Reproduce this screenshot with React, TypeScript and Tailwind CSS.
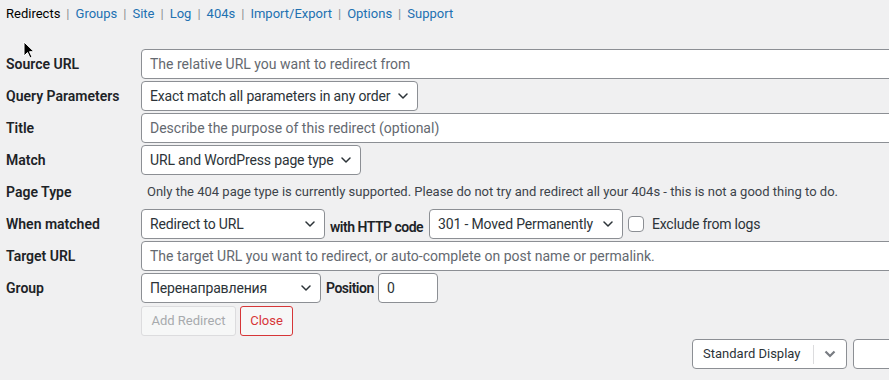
import React from "react";

const navItems = ["Groups", "Site", "Log", "404s", "Import/Export", "Options", "Support"];

const Chevron: React.FC = () => (
  <svg width="10" height="6" viewBox="0 0 10 6" fill="none" className="shrink-0">
    <path d="M1 1l4 4 4-4" stroke="#2c3338" strokeWidth="1.5" strokeLinecap="round" strokeLinejoin="round" />
  </svg>
);

const Select: React.FC<{ value: string; className: string }> = ({ value, className }) => (
  <div
    className={`flex h-[30px] items-center justify-between rounded-[4px] border border-[#8c8f94] bg-white pl-2 pr-[9px] text-[14px] text-[#2c3338] ${className}`}
  >
    <span className="whitespace-nowrap tracking-[-0.15px]">{value}</span>
    <Chevron />
  </div>
);

const TextInput: React.FC<{ placeholder?: string; value?: string; className: string }> = ({
  placeholder,
  value,
  className,
}) => (
  <div
    className={`flex h-[30px] items-center rounded-[4px] border border-[#8c8f94] bg-white px-2 text-[14px] ${className}`}
  >
    {value ? (
      <span className="text-[#2c3338]">{value}</span>
    ) : (
      <span className="whitespace-nowrap text-[#646970]">{placeholder}</span>
    )}
  </div>
);

const Row: React.FC<{ label: string; children: React.ReactNode }> = ({ label, children }) => (
  <div className="flex h-[32px] items-center">
    <div className="w-[135px] shrink-0 text-[14px] font-semibold text-[#1d2327]">{label}</div>
    <div className="flex items-center">{children}</div>
  </div>
);

const Cursor: React.FC = () => (
  <svg
    width="12"
    height="18"
    viewBox="0 0 12 18"
    className="pointer-events-none absolute left-[23px] top-[41px]"
  >
    <path d="M1 1v14l3.5-3.5 2.5 5.5 2-1-2.5-5.3H11z" fill="#000" stroke="#fff" strokeWidth="1" />
  </svg>
);

const App: React.FC = () => {
  return (
    <div className="relative h-[380px] w-full overflow-hidden bg-[#f0f0f1] font-['Roboto',sans-serif] text-[#2c3338]">
      <div className="flex items-center pl-[6px] pt-[6px] text-[13px] leading-[16px]">
        <span className="text-black">Redirects</span>
        {navItems.map((item) => (
          <React.Fragment key={item}>
            <span className="mx-[6px] text-[#8c8f94]">|</span>
            <span className="text-[#2271b1]">{item}</span>
          </React.Fragment>
        ))}
      </div>

      <div className="mt-[26px] w-[1000px] pl-[6px]">
        <Row label="Source URL">
          <TextInput className="w-[800px]" placeholder="The relative URL you want to redirect from" />
        </Row>
        <Row label="Query Parameters">
          <Select className="w-[277px]" value="Exact match all parameters in any order" />
        </Row>
        <Row label="Title">
          <TextInput className="w-[800px]" placeholder="Describe the purpose of this redirect (optional)" />
        </Row>
        <Row label="Match">
          <Select className="w-[220px]" value="URL and WordPress page type" />
        </Row>
        <Row label="Page Type">
          <span className="pl-[6px] text-[13px] text-[#3c434a]">
            Only the 404 page type is currently supported. Please do not try and redirect all your 404s - this is
            not a good thing to do.
          </span>
        </Row>
        <Row label="When matched">
          <Select className="w-[184px]" value="Redirect to URL" />
          <span className="ml-[5px] mt-[6px] w-[99px] whitespace-nowrap text-[14px] font-semibold tracking-[-0.5px] text-[#1d2327]">
            with HTTP code
          </span>
          <Select className="w-[194px]" value="301 - Moved Permanently" />
          <span className="ml-[5px] h-[16px] w-[16px] rounded-[4px] border border-[#8c8f94] bg-white" />
          <span className="ml-[8px] whitespace-nowrap text-[14px] tracking-[-0.2px] text-[#2c3338]">
            Exclude from logs
          </span>
        </Row>
        <Row label="Target URL">
          <TextInput
            className="w-[800px]"
            placeholder="The target URL you want to redirect, or auto-complete on post name or permalink."
          />
        </Row>
        <Row label="Group">
          <Select className="w-[180px]" value="Перенаправления" />
          <span className="ml-[5px] w-[52px] whitespace-nowrap text-[14px] font-semibold tracking-[-0.5px] text-[#1d2327]">
            Position
          </span>
          <TextInput className="w-[60px]" value="0" />
        </Row>

        <div className="mt-[2px] flex gap-[4px] pl-[135px]">
          <div className="flex h-[30px] w-[95px] items-center justify-center rounded-[3px] border border-[#dcdcde] bg-[#f6f7f7] text-[13px] text-[#a7aaad]">
            Add Redirect
          </div>
          <div className="flex h-[30px] w-[53px] items-center justify-center rounded-[3px] border border-[#d63638] bg-[#f6f7f7] text-[13px] text-[#d63638]">
            Close
          </div>
        </div>
      </div>

      <div className="mt-[3px] flex w-[1000px] justify-end gap-[6px]">
        <div className="flex h-[30px] w-[155px] items-center rounded-[4px] border border-[#8c8f94] bg-white text-[13px] text-[#2c3338]">
          <span className="flex-1 pl-[10px]">Standard Display</span>
          <span className="h-[19px] w-px bg-[#dcdcde]" />
          <span className="flex w-[32px] items-center justify-center">
            <svg width="12" height="8" viewBox="0 0 12 8" fill="none">
              <path d="M1.5 1.5L6 6l4.5-4.5" stroke="#787c82" strokeWidth="2.2" />
            </svg>
          </span>
        </div>
        <div className="h-[30px] w-[147px] rounded-[4px] border border-[#8c8f94] bg-white" />
      </div>

      <div className="mt-[11px] flex items-start pl-[5px]">
        <div className="h-[30px] w-[94px] rounded-[3px] border border-[#dcdcde] bg-[#f6f7f7]" />
        <div className="ml-[6px] h-[30px] w-[47px] rounded-[3px] border border-[#dcdcde] bg-[#f6f7f7]" />
        <div className="ml-[10px] h-[30px] w-[157px] rounded-[4px] border border-[#8c8f94] bg-white" />
        <div className="ml-[7px] h-[30px] w-[47px] rounded-[3px] border border-[#d63638] bg-[#f6f7f7]" />
        <div className="ml-[8px] h-[30px] w-[80px] rounded-[4px] border border-[#8c8f94] bg-white" />
      </div>

      <Cursor />
    </div>
  );
};

export default App;
